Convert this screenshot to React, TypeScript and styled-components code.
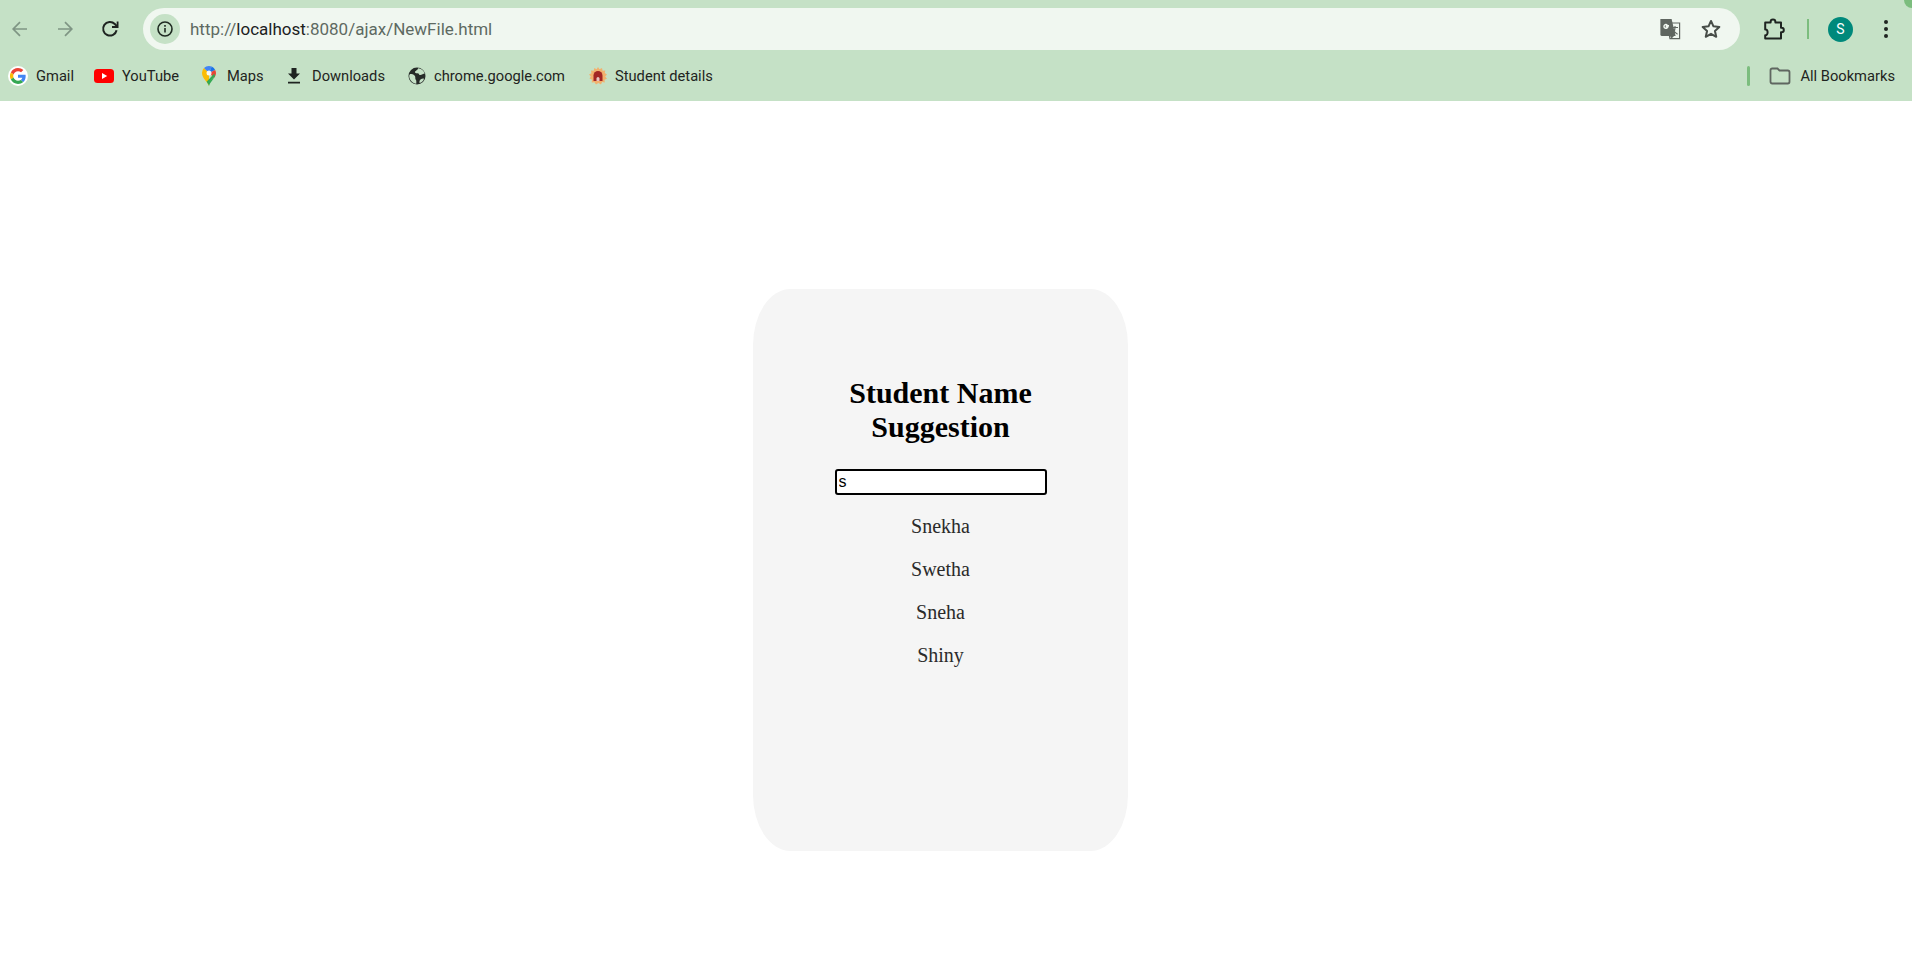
import React from 'react';
import styled, {createGlobalStyle} from 'styled-components';

const names = ['Snekha', 'Swetha', 'Sneha', 'Shiny'];

function App() {
    return (
        <>
            <GlobalStyle/>
            <Browser>
                <CornerMark/>
                <Toolbar>
                    <NavGroup>
                        <NavBtn $dim>
                            <svg width="20" height="20" viewBox="0 0 20 20" fill="none" stroke="currentColor" strokeWidth="1.7">
                                <path d="M17 10H3.5M10 3.2 3.2 10l6.8 6.8"/>
                            </svg>
                        </NavBtn>
                        <NavBtn $dim>
                            <svg width="20" height="20" viewBox="0 0 20 20" fill="none" stroke="currentColor" strokeWidth="1.7">
                                <path d="M3 10h13.5M10 3.2l6.8 6.8-6.8 6.8"/>
                            </svg>
                        </NavBtn>
                        <NavBtn>
                            <svg width="20" height="20" viewBox="0 0 20 20" fill="none" stroke="currentColor" strokeWidth="2">
                                <path d="M16.6 11.2A6.8 6.8 0 1 1 14.8 5L17 7.2"/>
                                <path d="M17.6 2.4v5.6h-5.6" strokeWidth="1.8"/>
                            </svg>
                        </NavBtn>
                    </NavGroup>
                    <AddressBar>
                        <InfoChip>
                            <svg width="18" height="18" viewBox="0 0 18 18" fill="none" stroke="#1f2a22" strokeWidth="1.6">
                                <circle cx="9" cy="9" r="7"/>
                                <path d="M9 8v4.6M9 5v1.8"/>
                            </svg>
                        </InfoChip>
                        <UrlText>http://<UrlHost>localhost</UrlHost>:8080/ajax/NewFile.html</UrlText>
                        <AddressIcons>
                            <svg width="24" height="24" viewBox="0 0 24 24">
                                <path d="M9 6h12.6v15.6H12z" fill="#f0f7f0" stroke="#5f6660" strokeWidth="1.2"/>
                                <path d="M2.4 2h11.2l4 17H4a1.6 1.6 0 0 1-1.6-1.6z" fill="#5f6660"/>
                                <path d="M11 8.6H8.4v1.3h1.5a2 2 0 1 1-.6-2" fill="none" stroke="#f0f7f0" strokeWidth="1.4"/>
                                <path d="M14 10.5h6M17 9v1.5c0 3-1.6 5.5-3 6.6M15.4 13c.9 1.6 2.6 3.3 4.2 4.2" fill="none" stroke="#5f6660" strokeWidth="1.1"/>
                                <path d="M12 19l1.6 2.6 2.4-2.6z" fill="#5f6660"/>
                            </svg>
                            <svg width="22" height="22" viewBox="0 0 24 24" fill="none" stroke="#474d48" strokeWidth="2.2" strokeLinejoin="round">
                                <path d="m12 3.2 2.7 5.9 6.4.7-4.8 4.3 1.4 6.4L12 17.2l-5.7 3.3 1.4-6.4-4.8-4.3 6.4-.7z"/>
                            </svg>
                        </AddressIcons>
                    </AddressBar>
                    <ToolGroup>
                        <svg width="24" height="24" viewBox="0 0 24 24" fill="none" stroke="#1f2421" strokeWidth="2" strokeLinejoin="round">
                            <path d="M3.2 5.6h5.4V5a2.4 2.4 0 0 1 4.8 0v.6H19v5.2h.6a2.2 2.2 0 0 1 0 4.4H19v6.2H3.2v-3.2c3.2.6 3.2-6.4 0-5.6z"/>
                        </svg>
                        <Divider/>
                        <Avatar>S</Avatar>
                        <Dots><i/><i/><i/></Dots>
                    </ToolGroup>
                </Toolbar>
                <BookmarkBar>
                    <Bookmark $w={86}>
                        <GoogleBadge>
                            <svg width="16" height="16" viewBox="0 0 48 48">
                                <path fill="#EA4335" d="M24 9.5c3.5 0 6.7 1.2 9.2 3.6l6.9-6.9C35.9 2.4 30.5 0 24 0 14.6 0 6.5 5.4 2.6 13.2l8 6.2C12.4 13.7 17.7 9.5 24 9.5z"/>
                                <path fill="#4285F4" d="M47 24.5c0-1.6-.1-3.1-.4-4.5H24v9h12.9c-.6 3-2.2 5.5-4.7 7.2l7.7 6C44.4 38 47 31.8 47 24.5z"/>
                                <path fill="#FBBC05" d="M10.5 28.6a14.5 14.5 0 0 1 0-9.2l-8-6.2a24 24 0 0 0 0 21.6z"/>
                                <path fill="#34A853" d="M24 48c6.5 0 11.9-2.1 15.9-5.8l-7.7-6c-2.2 1.4-4.9 2.3-8.2 2.3-6.3 0-11.6-4.2-13.5-9.9l-8 6.2C6.5 42.6 14.6 48 24 48z"/>
                            </svg>
                        </GoogleBadge>
                        <BookmarkLabel>Gmail</BookmarkLabel>
                    </Bookmark>
                    <Bookmark $w={108}>
                        <svg width="20" height="14" viewBox="0 0 20 14">
                            <rect width="20" height="14" rx="3.5" fill="#f00"/>
                            <path d="M8 4v6l5.2-3z" fill="#fff"/>
                        </svg>
                        <BookmarkLabel>YouTube</BookmarkLabel>
                    </Bookmark>
                    <Bookmark $w={85}>
                        <svg width="14" height="20" viewBox="0 0 14 20">
                            <path d="M7 20C5.8 16 0 12.4 0 7a7 7 0 0 1 2-5l5 5z" fill="#fbbc04"/>
                            <path d="M2 2a7 7 0 0 1 5-2 7 7 0 0 1 2.800.6L7 7z" fill="#4285f4"/>
                            <path d="M9.800.6A7 7 0 0 1 13.200 4L7 7z" fill="#1a73e8"/>
                            <path d="M13.200 4A7 7 0 0 1 14 7c0 1.800-.8 3.300-1.700 4.700L7 7z" fill="#ea4335"/>
                            <path d="M12.300 11.700C10.500 14.500 7.800 16.800 7 20c-.3-1.200-.9-2.200-1.600-3.200z" fill="#34a853"/>
                            <path d="M4.600 15.700 12.300 7.500 13 10.400 6 17.600z" fill="#34a853"/>
                            <circle cx="7" cy="7" r="2.500" fill="#fff" opacity=".9"/>
                        </svg>
                        <BookmarkLabel $gap={11}>Maps</BookmarkLabel>
                    </Bookmark>
                    <Bookmark $w={121}>
                        <svg width="14" height="16" viewBox="0 0 14 16" fill="#1f2421">
                            <path d="M4.500 0h5v5.500H13L7 11.500 1 5.500h3.500zM1 13.800h12V15.600H1z"/>
                        </svg>
                        <BookmarkLabel $gap={11}>Downloads</BookmarkLabel>
                    </Bookmark>
                    <Bookmark $w={181}>
                        <svg width="18" height="18" viewBox="0 0 18 18">
                            <circle cx="9" cy="9" r="8.500" fill="#262b28"/>
                            <path d="M2 7c2 0 3.500.3 4.500 1.500s.8 2 .8 3c0 1 1 1.300 1 2.800v2.500C5 16.500 1 13 1.200 8.500zM10 1.300c.3 1-1 1.700-1.700 2.200-.7.600-1.500 1-1.300 2 .2.800 1.500.7 2.500.7 1.200 0 1.700.8 1.800 1.700.9.300 2-.2 3.700-.9.600-.2 1.500-.5 1.800-.4-.7-2.700-3.300-5-6.800-5.300zM11.500 16c-.2-1.700.1-3 1.300-3.700 1-.6 2-.9 3.200-.6-.5 2-2.300 3.800-4.500 4.300z" fill="#c5e1c6"/>
                        </svg>
                        <BookmarkLabel>chrome.google.com</BookmarkLabel>
                    </Bookmark>
                    <Bookmark $w={130}>
                        <svg width="18" height="18" viewBox="0 0 18 18">
                            <path d="M9 0l1.500 2.200L13 1l.6 2.700 2.700-.3-.5 2.700L18 7.500 16.200 9.500 18 11.700l-2.500 1 .3 2.700-2.700-.3L12 17.600 9.500 16 7 17.600 5.500 15.200l-2.800.3.300-2.700-2.500-1.200L1.800 9.500 0 7.500 2.400 6.200 2 3.400l2.700.3L5.300 1l2.300 1.200z" fill="#f2b16e"/>
                            <path d="M4.500 14V8.500a4.500 4.500 0 0 1 9 0V14z" fill="#a32624"/>
                            <path d="M7.500 14v-2.500a1.500 1.500 0 0 1 3 0V14z" fill="#e8c5c0"/>
                        </svg>
                        <BookmarkLabel>Student details</BookmarkLabel>
                    </Bookmark>
                    <AllBookmarks>
                        <Divider/>
                        <svg width="22" height="18" viewBox="0 0 22 18" fill="none" stroke="#5f6660" strokeWidth="1.800">
                            <path d="M1.500 3.200c0-1 .7-1.700 1.700-1.700h5.300l2 2h8.300c1 0 1.700.7 1.700 1.700v9.600c0 1-.7 1.700-1.700 1.700H3.200c-1 0-1.700-.7-1.700-1.700z"/>
                        </svg>
                        <BookmarkLabel>All Bookmarks</BookmarkLabel>
                    </AllBookmarks>
                </BookmarkBar>
            </Browser>
            <Page>
                <Card>
                    <Title>Student Name Suggestion</Title>
                    <NameInput defaultValue="s"/>
                    <NameList>
                        {names.map(name => <NameItem key={name}>{name}</NameItem>)}
                    </NameList>
                </Card>
            </Page>
        </>
    );
}

export default App;

const GlobalStyle = createGlobalStyle`
  html, body {
    margin: 0;
    padding: 0;
    height: 100%;
    background: #fff;
    overflow: hidden;
  }
`

const Browser = styled.header`
  position: relative;
  height: 101px;
  background: #c5e1c6;
  font-family: Roboto, "Noto Sans", sans-serif;
  overflow: hidden;
`

const CornerMark = styled.div`
  position: absolute;
  top: -8px;
  right: -8px;
  width: 16px;
  height: 16px;
  border-radius: 50%;
  background: #7cbd7e;
`

const Toolbar = styled.div`
  display: flex;
  align-items: center;
  height: 42px;
  padding-top: 8px;
`

const NavGroup = styled.div`
  display: flex;
  align-items: center;
  width: 143px;
  padding-left: 0;
`

const NavBtn = styled.div<{ $dim?: boolean }>`
  display: flex;
  align-items: center;
  justify-content: center;
  width: 40px;
  margin-right: 5px;
  color: ${props => props.$dim ? '#7f9584' : '#1f2421'};
`

const AddressBar = styled.div`
  display: flex;
  align-items: center;
  width: 1597px;
  height: 42px;
  border-radius: 21px;
  background: #f0f7f0;
  box-sizing: border-box;
  padding: 0 18px 0 7px;
`

const InfoChip = styled.div`
  display: flex;
  align-items: center;
  justify-content: center;
  width: 30px;
  height: 30px;
  border-radius: 50%;
  background: #c5e1c6;
`

const UrlText = styled.div`
  flex: 1;
  margin-left: 10px;
  font-size: 17px;
  color: #5e6a62;
`

const UrlHost = styled.span`
  color: #1b211d;
`

const AddressIcons = styled.div`
  display: flex;
  align-items: center;
  gap: 18px;
`

const ToolGroup = styled.div`
  display: flex;
  align-items: center;
  flex: 1;
  padding-left: 22px;

  > svg {
    flex: none;
  }
`

const Divider = styled.div`
  width: 2px;
  height: 20px;
  margin: 0 19px 0 21px;
  background: #7cbd7e;
  flex: none;
`

const Avatar = styled.div`
  display: flex;
  align-items: center;
  justify-content: center;
  width: 25px;
  height: 25px;
  border-radius: 50%;
  background: #00897b;
  color: #fff;
  font-size: 14px;
`

const Dots = styled.div`
  display: flex;
  flex-direction: column;
  gap: 3px;
  margin-left: 31px;

  i {
    width: 4px;
    height: 4px;
    border-radius: 50%;
    background: #1f2421;
  }
`

const BookmarkBar = styled.nav`
  display: flex;
  align-items: center;
  height: 37px;
  margin-top: 7px;
  padding-left: 8px;
`

const Bookmark = styled.div<{ $w: number }>`
  display: flex;
  align-items: center;
  width: ${props => props.$w}px;
  flex: none;
`

const BookmarkLabel = styled.span<{ $gap?: number }>`
  margin-left: ${props => props.$gap ?? 8}px;
  font-size: 14.7px;
  color: #1f2421;
  white-space: nowrap;
`

const GoogleBadge = styled.span`
  display: flex;
  align-items: center;
  justify-content: center;
  width: 20px;
  height: 20px;
  border-radius: 50%;
  background: #fff;
`

const AllBookmarks = styled.div`
  display: flex;
  align-items: center;
  margin-left: auto;
  padding-right: 17px;

  ${Divider} {
    width: 3px;
    border-radius: 2px;
    margin: 0 19px 0 0;
  }

  ${BookmarkLabel} {
    margin-left: 9px;
  }
`

const Page = styled.main`
  display: flex;
  justify-content: center;
  padding: 188px 31px 0 0;
  font-family: "Liberation Serif", "Times New Roman", serif;
`

const Card = styled.section`
  display: flex;
  flex-direction: column;
  align-items: center;
  box-sizing: border-box;
  width: 375px;
  height: 562px;
  padding-top: 87px;
  border-radius: 10%;
  background: #f5f5f5;
`

const Title = styled.h2`
  width: 212px;
  margin: 0 0 25px;
  font-size: 30px;
  font-weight: 700;
  text-align: center;
  color: #000;
`

const NameInput = styled.input`
  box-sizing: border-box;
  width: 212px;
  height: 26px;
  padding: 1px 2px;
  border: 2px solid #000;
  border-radius: 3px;
  outline: none;
  background: #fff;
  font-family: "Liberation Sans", Arial, sans-serif;
  font-size: 16px;
  color: #000;
`

const NameList = styled.div`
  display: flex;
  flex-direction: column;
  align-items: center;
  margin-top: 20px;
`

const NameItem = styled.div`
  height: 43px;
  font-size: 20px;
  color: #2a2a2a;
`
